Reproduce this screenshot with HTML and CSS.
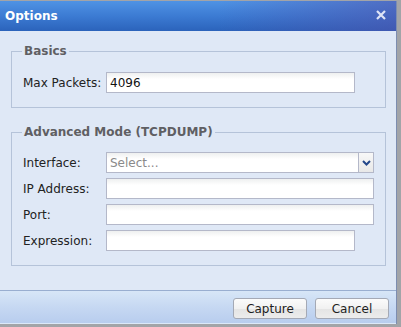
FILE: index.html
```html
<!DOCTYPE html>
<html lang="en">
<head>
    <meta charset="UTF-8">
    <title>Options</title>
    <link rel="stylesheet" href="styles.css">
</head>
<body>
    <div class="window">
        <div class="titlebar">
            <span class="title">Options</span>
            <svg class="close" width="10" height="10" viewBox="0 0 10 10">
                <path d="M1 1 L9 9 M9 1 L1 9" stroke="#dfe5f7" stroke-width="2.2" fill="none"/>
            </svg>
        </div>

        <div class="content">
            <fieldset class="group basics">
                <legend>Basics</legend>
                <div class="row">
                    <label for="maxPackets">Max Packets:</label>
                    <input type="text" id="maxPackets" class="field short" value="4096">
                </div>
            </fieldset>

            <fieldset class="group advanced">
                <legend>Advanced Mode (TCPDUMP)</legend>
                <div class="row">
                    <label>Interface:</label>
                    <div class="combo">
                        <input type="text" class="field combo-input" placeholder="Select...">
                        <span class="trigger">
                            <svg width="9" height="6" viewBox="0 0 9 6">
                                <path d="M1 1 L4.5 4.5 L8 1" stroke="#23478a" stroke-width="2" fill="none"/>
                            </svg>
                        </span>
                    </div>
                </div>
                <div class="row">
                    <label>IP Address:</label>
                    <input type="text" class="field wide">
                </div>
                <div class="row">
                    <label>Port:</label>
                    <input type="text" class="field wide">
                </div>
                <div class="row">
                    <label>Expression:</label>
                    <input type="text" class="field short">
                </div>
            </fieldset>
        </div>

        <div class="footer">
            <button type="button">Capture</button>
            <button type="button">Cancel</button>
        </div>
    </div>
</body>
</html>
```

FILE: styles.css
```css
body {
    margin: 0;
    padding-top: 1px;
    background-color: #a2a4a8;
    font-family: "DejaVu Sans", Verdana, sans-serif;
    font-size: 12px;
    color: #222;
    height: 326px;
    overflow: hidden;
}

.window {
    width: 396px;
    height: 323px;
    border-right: 1px solid #7d8db0;
    background-color: #dfe8f6;
    display: flex;
    flex-direction: column;
}

.titlebar {
    height: 30px;
    display: flex;
    align-items: center;
    justify-content: space-between;
    padding: 0 10px 0 5px;
    background:
        linear-gradient(to right, rgba(80, 80, 170, 0) 55%, rgba(80, 80, 170, 0.55) 100%),
        linear-gradient(to bottom, #4f93e4 0%, #3c7bd3 50%, #2b63bb 100%);
}

.title {
    color: #fff;
    font-weight: bold;
    font-size: 12px;
    margin-top: -1px;
}

.close {
    display: block;
    margin-top: -2px;
}

.content {
    flex: 1;
    padding: 13px 10px 0 11px;
}

.group {
    margin: 0;
    border: 1px solid #b5c3d9;
    padding: 14px 10px 14px 11px;
    min-width: 0;
}

.group legend {
    font-weight: bold;
    font-size: 12px;
    line-height: 14px;
    color: #5f5f63;
    padding: 0 2px;
    margin-left: -1px;
}

.advanced {
    margin-top: 17px;
    padding-top: 13px;
}

.row {
    display: flex;
    align-items: center;
    height: 21px;
}

.advanced .row + .row {
    margin-top: 5px;
}

.row label {
    width: 83px;
    flex: none;
}

.field {
    box-sizing: border-box;
    height: 21px;
    border: 1px solid #b4b8c9;
    background: linear-gradient(to bottom, #eef0f0 0, #ffffff 6px, #ffffff 100%);
    font-family: "DejaVu Sans", Verdana, sans-serif;
    font-size: 12px;
    color: #111;
    padding: 1px 3px 0;
    outline: none;
}

.field::placeholder {
    color: #8a8a8a;
}

.short {
    width: 249px;
}

.wide {
    width: 268px;
}

.combo {
    display: flex;
    width: 268px;
    height: 21px;
}

.combo-input {
    width: 252px;
    border-right: none;
}

.trigger {
    box-sizing: border-box;
    width: 16px;
    height: 21px;
    border: 1px solid #b4b8c9;
    background: linear-gradient(to bottom, #f8f8f8, #e8e8e8);
    display: flex;
    align-items: center;
    justify-content: center;
}

.footer {
    height: 34px;
    border-top: 1px solid #99aed0;
    border-bottom: 1px solid #dce8f8;
    background: linear-gradient(to bottom, #d7e6f7 0%, #c6d8f2 50%, #b8cdee 100%);
    display: flex;
    justify-content: flex-end;
    align-items: flex-start;
    gap: 8px;
    padding: 7px 7px 0 0;
    box-sizing: border-box;
}

button {
    width: 74px;
    height: 21px;
    border: 1px solid #a4a9b5;
    border-radius: 3px;
    background: linear-gradient(to bottom, #fbfbfb 0%, #f1f1f1 50%, #e4e4e4 51%, #ececec 100%);
    font-family: "DejaVu Sans", Verdana, sans-serif;
    font-size: 12px;
    color: #1e1e1e;
    padding: 0;
    cursor: pointer;
}
```
